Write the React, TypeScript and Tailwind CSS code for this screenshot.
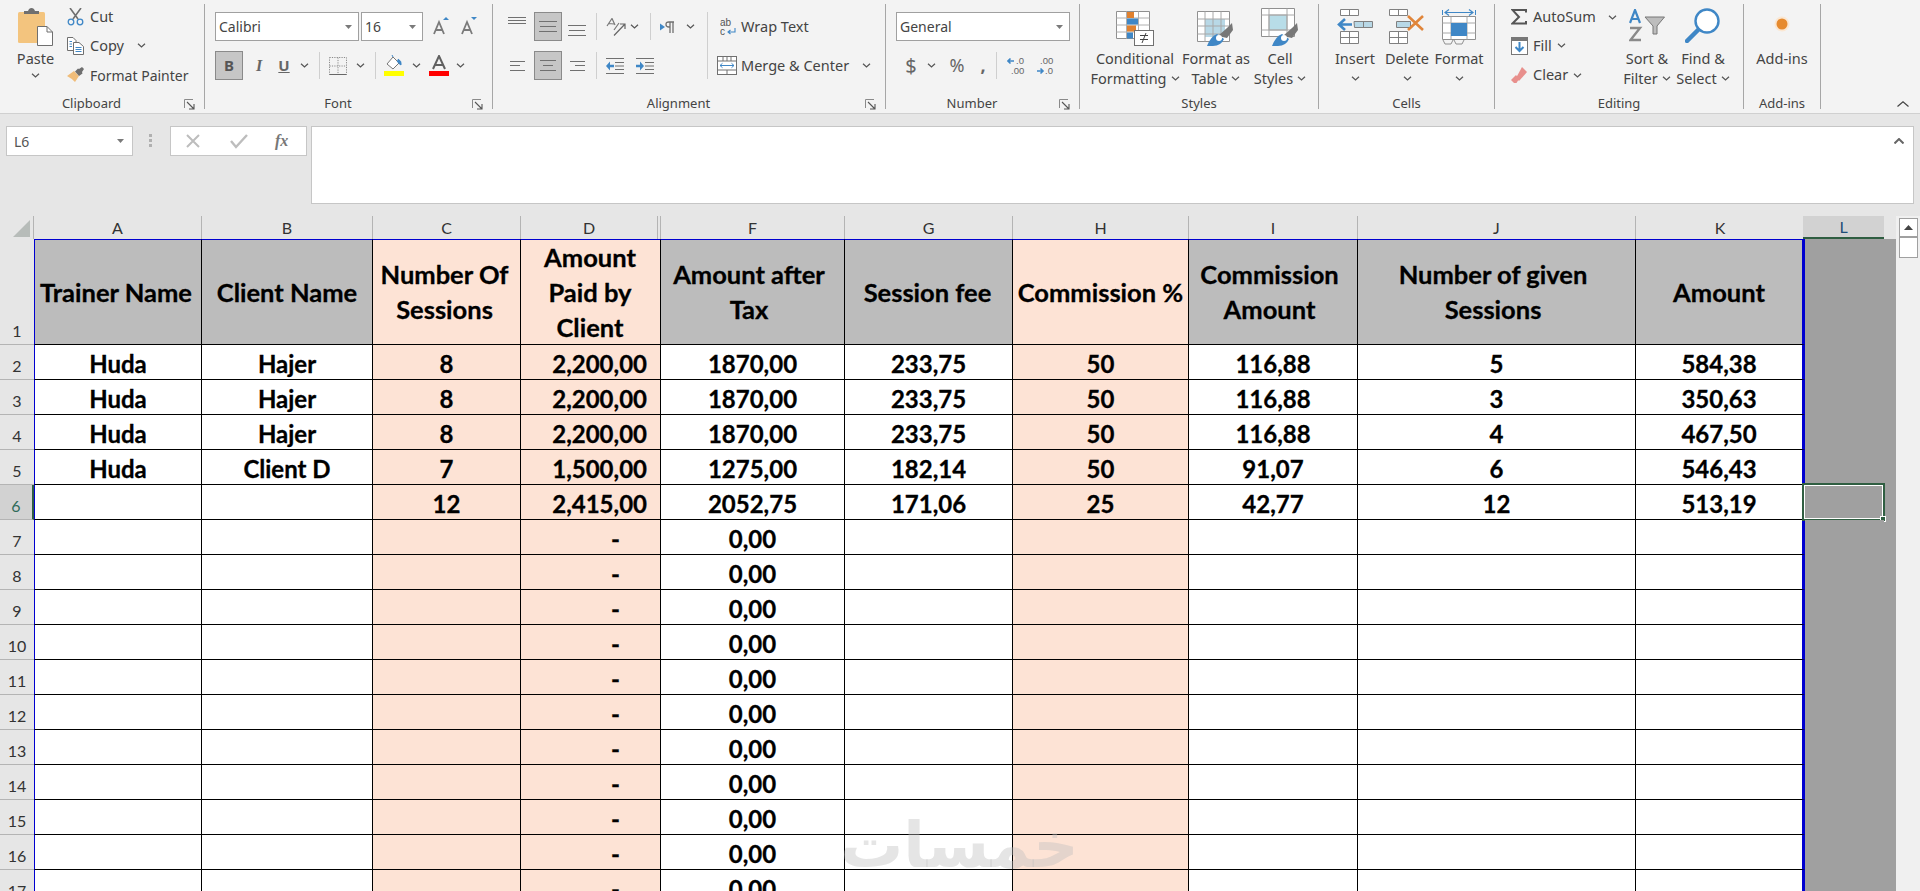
import type { ReactNode } from "react";

const uiFont = "[font-family:'Noto_Sans',sans-serif]";

const Chev = ({ className = "" }: { className?: string }) => (
  <svg width="9" height="5" viewBox="0 0 9 5" className={"shrink-0 " + className}>
    <path d="M1 0.7 L4.5 4 L8 0.7" fill="none" stroke="#555" strokeWidth="1.2" />
  </svg>
);

const DropArrow = () => (
  <svg width="7" height="4" viewBox="0 0 7 4" className="shrink-0">
    <path d="M0 0 H7 L3.5 4 Z" fill="#7a7a7a" />
  </svg>
);

const Launcher = () => (
  <svg width="11" height="11" viewBox="0 0 11 11">
    <path d="M0.5 9 V0.5 H9" fill="none" stroke="#8a8a8a" />
    <path d="M3 3 L9.5 9.5 M5 10 H10 V5" fill="none" stroke="#555" strokeWidth="1.1" />
  </svg>
);

const Sep = ({ className = "" }: { className?: string }) => (
  <div className={"w-px bg-[#cfcfcf] shrink-0 " + className} />
);

const Lines = ({ w = 18, h = 29, ys, xs }: { w?: number; h?: number; ys: number[]; xs: [number, number][] }) => (
  <svg width={w} height={h} viewBox={`0 0 ${w} ${h}`} className="shrink-0">
    {ys.map((y, i) => (
      <line key={y} x1={xs[i][0]} x2={xs[i][1]} y1={y + 0.5} y2={y + 0.5} stroke="#707070" />
    ))}
  </svg>
);

const PasteIcon = () => (
  <svg width="35" height="38" viewBox="0 0 35 38">
    <rect x="0" y="4" width="27" height="31" rx="1.5" fill="#f3c47e" />
    <path d="M6 6 V3 H10 Q11 0 13.5 0 Q16 0 17 3 H21 V6 Z" fill="#6f6f6f" />
    <path d="M19.5 18.5 H29 L34.5 24 V37.5 H19.5 Z" fill="#fff" stroke="#6f6f6f" />
    <path d="M29 18.5 V24 H34.5" fill="none" stroke="#6f6f6f" />
  </svg>
);

const CutIcon = () => (
  <svg width="17" height="18" viewBox="0 0 17 18">
    <path d="M3 0 L11 11 M14 0 L6 11" stroke="#6f6f6f" strokeWidth="1.6" fill="none" />
    <circle cx="4" cy="14" r="2.8" fill="none" stroke="#3f87c6" strokeWidth="1.3" />
    <circle cx="13" cy="14" r="2.8" fill="none" stroke="#3f87c6" strokeWidth="1.3" />
  </svg>
);

const CopyIcon = () => (
  <svg width="17" height="18" viewBox="0 0 17 18">
    <path d="M0.5 0.5 H6 L9 3.5 V13.5 H0.5 Z" fill="#fff" stroke="#6f6f6f" />
    <path d="M6.5 5.5 H12 L16.5 9.5 V17.5 H6.5 Z" fill="#fff" stroke="#6f6f6f" />
    <path d="M2.5 4.5 H5 M2.5 7 H5 M2.5 9.5 H5 M8.5 10.5 H14.5 M8.5 12.5 H14.5 M8.5 14.5 H14.5" stroke="#3f87c6" />
  </svg>
);

const PainterIcon = () => (
  <svg width="18" height="16" viewBox="0 0 18 16">
    <path d="M0 9 L7 4 L12 9 L8 15 Q4 11 0 9 Z" fill="#f0bd7a" />
    <path d="M8 4.5 L11 1.5 L12 2 L15 0 L17 2 L15 5 L15.5 6.5 L12 9 Z" fill="#6f6f6f" />
  </svg>
);

const GrowA = ({ up }: { up: boolean }) => (
  <svg width="16" height="19" viewBox="0 0 16 19">
    <path d="M1 17 L6 5 L11 17 M3 13 H9" fill="none" stroke="#7a7a7a" strokeWidth="1.8" />
    {up ? <path d="M10 3 L13 0 L16 3 Z" fill="#3f87c6" /> : <path d="M10 0 H16 L13 3 Z" fill="#3f87c6" />}
  </svg>
);

const BorderIcon = () => (
  <svg width="18" height="18" viewBox="0 0 18 18">
    <path d="M0.5 0.5 H17.5 V17.5 H0.5 Z M9 0.5 V17.5 M0.5 9 H17.5" fill="none" stroke="#8a8a8a" strokeDasharray="1.2 1.2" />
    <path d="M0.5 17.5 H17.5" stroke="#666" />
  </svg>
);

const FillIcon = () => (
  <svg width="20" height="21" viewBox="0 0 20 21">
    <path d="M3 9 L9 2 L15 8 L9 14 Z" fill="#fff" stroke="#777" />
    <path d="M9 2 L8 0 M14 4 Q18 6 17 10 Q15 9 13 6" fill="#3f87c6" stroke="#3f87c6" />
    <rect y="16" width="20" height="5" fill="#ffff00" />
  </svg>
);

const FontColorIcon = () => (
  <svg width="20" height="21" viewBox="0 0 20 21">
    <path d="M4 14 L10 1 L16 14 M6.5 10 H13.5" fill="none" stroke="#606060" strokeWidth="2" />
    <rect y="16" width="20" height="5" fill="#ff0000" />
  </svg>
);

const OrientIcon = () => (
  <svg width="20" height="18" viewBox="0 0 20 18">
    <path d="M1 8 L6 0.5 L9 7 M2.5 5.5 L8 6 M8 12 L13 5" fill="none" stroke="#777" strokeWidth="1.2" />
    <path d="M8 17.5 L19 6 M14 6 H19 V11" fill="none" stroke="#666" strokeWidth="1.2" />
  </svg>
);

const RtlIcon = () => (
  <svg width="16" height="12" viewBox="0 0 16 12">
    <path d="M0 2.5 L5 6 L0 9.5 Z" fill="#3f87c6" />
    <path d="M14 1 H9 Q6 1 6 3.5 Q6 6 9 6 H10 V12 M10 1 V12 M13 1 V12" fill="none" stroke="#707070" strokeWidth="1.3" />
  </svg>
);

const IndentIcon = ({ flip }: { flip?: boolean }) => (
  <svg width="18" height="16" viewBox="0 0 18 16">
    <path d="M0 0.5 H18 M9 4.5 H18 M9 8 H18 M9 11.5 H18 M0 15.5 H18" stroke="#707070" />
    {flip ? (
      <path d="M0 6.8 H4 V3.5 L8 8 L4 12.5 V9.2 H0 Z" fill="#3f87c6" />
    ) : (
      <path d="M8 6.8 H4 V3.5 L0 8 L4 12.5 V9.2 H8 Z" fill="#3f87c6" />
    )}
  </svg>
);

const WrapIcon = () => (
  <svg width="16" height="18" viewBox="0 0 16 18">
    <text x="0" y="8" fontSize="10" fill="#555" className="[font-family:'Liberation_Sans',sans-serif]">ab</text>
    <text x="0" y="17" fontSize="10" fill="#555" className="[font-family:'Liberation_Sans',sans-serif]">c</text>
    <path d="M15 10 V14 H8 M10.5 12 L8 14 L10.5 16" fill="none" stroke="#3f87c6" strokeWidth="1.1" />
  </svg>
);

const MergeIcon = () => (
  <svg width="20" height="19" viewBox="0 0 20 19">
    <rect x="0.5" y="0.5" width="19" height="18" fill="#fff" stroke="#707070" />
    <path d="M0.5 5 H19.5 M0.5 14 H19.5 M10 0.5 V5 M6 5 V0.5 M14 0.5 V5 M10 14 V18.5" stroke="#707070" />
    <path d="M3 9.5 H17 M5.5 7.3 L3 9.5 L5.5 11.7 M14.5 7.3 L17 9.5 L14.5 11.7" fill="none" stroke="#3f87c6" />
  </svg>
);

const DecIcon = ({ more }: { more?: boolean }) => (
  <svg width="18" height="20" viewBox="0 0 18 20">
    {more ? (
      <>
        <path d="M7 5 H1 M3.5 2.5 L1 5 L3.5 7.5" fill="none" stroke="#3f87c6" strokeWidth="1.6" />
        <text x="9" y="8" fontSize="9.5" fill="#666" className="[font-family:'Liberation_Sans',sans-serif]">.0</text>
        <text x="4" y="18" fontSize="9.5" fill="#666" className="[font-family:'Liberation_Sans',sans-serif]">.00</text>
      </>
    ) : (
      <>
        <text x="4" y="8" fontSize="9.5" fill="#666" className="[font-family:'Liberation_Sans',sans-serif]">.00</text>
        <path d="M1 15 H7 M4.5 12.5 L7 15 L4.5 17.5" fill="none" stroke="#3f87c6" strokeWidth="1.6" />
        <text x="9" y="18" fontSize="9.5" fill="#666" className="[font-family:'Liberation_Sans',sans-serif]">.0</text>
      </>
    )}
  </svg>
);

const CondIcon = () => (
  <svg width="38" height="35" viewBox="0 0 38 35">
    <path d="M0.5 0.5 H33.5 V27.5 H0.5 Z" fill="#fff" stroke="#909090" />
    <path d="M10.5 0.5 V27.5 M22.5 0.5 V27.5 M0.5 7 H33.5 M0.5 14 H33.5 M0.5 21 H33.5" stroke="#b0b0b0" />
    <rect x="11" y="1" width="7" height="6" fill="#e0812f" />
    <rect x="11" y="7.5" width="11" height="6" fill="#3f87c6" />
    <rect x="11" y="14.5" width="9" height="6" fill="#e0812f" />
    <rect x="11" y="21.5" width="6" height="6" fill="#3f87c6" />
    <rect x="18.5" y="19.5" width="19" height="15" fill="#fff" stroke="#707070" />
    <path d="M24 24.5 H32 M24 28.5 H32 M30 22 L26 32" stroke="#444" fill="none" />
  </svg>
);

const BrushPart = ({ x = 22, y = 15 }: { x?: number; y?: number }) => (
  <g transform={`translate(${x} ${y})`}>
    <path d="M0 13 L9 5 L14 0 L15 7 L9 15 Z" fill="#777" />
    <path d="M-11 23 Q-7 13 -1 11 L6 16 Q3 23 -5 23 Z" fill="#3f87c6" />
    <circle cx="1" cy="15" r="3" fill="#fff" />
  </g>
);

const TableIcon = () => (
  <svg width="38" height="35" viewBox="0 0 38 35">
    <path d="M0.5 0.5 H32.5 V30.5 H0.5 Z" fill="#fff" stroke="#909090" />
    <rect x="8" y="8" width="20" height="18" fill="#b8d8e6" />
    <path d="M8 0.5 V30.5 M16 0.5 V30.5 M24 0.5 V30.5 M0.5 8 H32.5 M0.5 15 H32.5 M0.5 23 H32.5" stroke="#a8a8a8" />
    <BrushPart x={21} y={12} />
  </svg>
);

const StylesIcon = () => (
  <svg width="39" height="38" viewBox="0 0 39 38">
    <path d="M0.5 0.5 H33.5 V28.5 H0.5 Z" fill="#fff" stroke="#909090" />
    <rect x="8" y="7" width="18" height="15" fill="#b8dde8" stroke="#a8a8a8" />
    <path d="M8 0.5 V28.5 M26 0.5 V28.5 M0.5 7 H33.5 M0.5 22 H33.5" stroke="#a8a8a8" />
    <BrushPart x={22} y={15} />
  </svg>
);

const Grid2 = ({ x, y }: { x: number; y: number }) => (
  <g transform={`translate(${x} ${y})`}>
    <path d="M0.5 0.5 H18.5 V6.5 H0.5 Z M9.5 0.5 V6.5" fill="#fff" stroke="#808080" />
  </g>
);

const InsertIcon = () => (
  <svg width="36" height="35" viewBox="0 0 36 35">
    <Grid2 x={3} y={0} />
    <path d="M17 12.5 H35.5 V18.5 H17.5 Z M26.5 12.5 V18.5" fill="#b8d8e6" stroke="#808080" />
    <path d="M15 15.5 H2 M8 10 L2 15.5 L8 21" fill="none" stroke="#3f87c6" strokeWidth="2.6" />
    <path d="M3.5 22.5 H21.5 V34.5 H3.5 Z M12.5 22.5 V34.5 M3.5 28.5 H21.5" fill="#fff" stroke="#808080" />
  </svg>
);

const DeleteIcon = () => (
  <svg width="36" height="35" viewBox="0 0 36 35">
    <Grid2 x={0} y={0} />
    <path d="M7.5 12.5 H21.5 V18.5 H7.5 Z" fill="#b8d8e6" stroke="#808080" />
    <path d="M19 7 L34 21 M34 7 L19 21" stroke="#e0853a" strokeWidth="2.6" />
    <path d="M0.5 22.5 H18.5 V34.5 H0.5 Z M9.5 22.5 V34.5 M0.5 28.5 H18.5" fill="#fff" stroke="#808080" />
  </svg>
);

const FormatIcon = () => (
  <svg width="34" height="37" viewBox="0 0 34 37">
    <path d="M0.5 2 V7 M33.5 2 V7" stroke="#3f87c6" />
    <path d="M3 4.5 H31 M7 1.5 L3 4.5 L7 7.5 M27 1.5 L31 4.5 L27 7.5" fill="none" stroke="#3f87c6" strokeWidth="1.2" />
    <path d="M0.5 8.5 H33.5 V31.5 H0.5 Z" fill="#fff" stroke="#909090" />
    <path d="M9 8.5 V31.5 M25 8.5 V31.5 M0.5 15 H33.5 M0.5 25 H33.5" stroke="#a8a8a8" />
    <rect x="9" y="15" width="16" height="13" fill="#3f87c6" />
    <path d="M1 32 L3 36 H9 L11 32 M12 32 L14 36 H20 L22 32" fill="none" stroke="#909090" />
  </svg>
);

const SigmaIcon = () => (
  <svg width="16" height="16" viewBox="0 0 16 16">
    <path d="M15 3.5 V1 H1.5 L8 8 L1.5 14.5 H15 V12" fill="none" stroke="#555" strokeWidth="2" />
  </svg>
);

const FillDownIcon = () => (
  <svg width="17" height="18" viewBox="0 0 17 18">
    <rect x="0.5" y="0.5" width="16" height="17" fill="#fff" stroke="#777" />
    <rect x="1" y="1" width="15" height="3" fill="#777" />
    <path d="M8.5 5 V14 M4.5 10 L8.5 14 L12.5 10" fill="none" stroke="#3f87c6" strokeWidth="2" />
  </svg>
);

const EraserIcon = () => (
  <svg width="16" height="16" viewBox="0 0 16 16">
    <path d="M11 0 L16 5 L8 14 L5 11 Z" fill="#e88f8c" />
    <path d="M5 8 L8 12 L5.5 16 H3 L0 13 Z" fill="#e88f8c" />
  </svg>
);

const SortIcon = () => (
  <svg width="36" height="33" viewBox="0 0 36 33">
    <path d="M1 14 L6 1 L11 14 M3 10 H9" fill="none" stroke="#3f87c6" strokeWidth="2.2" />
    <path d="M1 19 H11 L1.5 31 H12" fill="none" stroke="#8a8a8a" strokeWidth="2.4" />
    <path d="M16 8 H35.5 L28 17 V25 L24 25 V17 Z" fill="#bdbdbd" stroke="#777" />
  </svg>
);

const FindIcon = () => (
  <svg width="36" height="35" viewBox="0 0 36 35">
    <circle cx="22" cy="13" r="11.5" fill="#fff" stroke="#3f87c6" strokeWidth="2.4" />
    <path d="M13 22 L2 33" stroke="#3f87c6" strokeWidth="4.5" strokeLinecap="round" />
  </svg>
);

const AddinIcon = () => (
  <svg width="16" height="16" viewBox="0 0 16 16">
    <circle cx="8" cy="8" r="7.5" fill="#fbe7d2" />
    <circle cx="8" cy="8" r="5.5" fill="#e68a2e" />
  </svg>
);

const Group = ({ w, label, launcher, children }: { w: string; label: string; launcher?: boolean; children: ReactNode }) => (
  <div className={"flex flex-col shrink-0 " + w}>
    <div className="h-[92px]">{children}</div>
    <div className="flex h-[21px] items-center pt-[3px]">
      <div className="flex-1 text-center text-[13px] text-[#444]">{label}</div>
      {launcher && (
        <div className="flex w-[21px] items-center justify-start pt-[1px] pl-[1px]">
          <Launcher />
        </div>
      )}
    </div>
  </div>
);

const Divider = () => <div className="my-[4px] w-px shrink-0 bg-[#a6a6a6]" />;

const BigBtn = ({ w, icon, line1, line2, iconPad = "pb-[2px]" }: { w: string; icon: ReactNode; line1: string; line2?: string; iconPad?: string }) => (
  <div className={"flex flex-col items-center shrink-0 " + w}>
    <div className={"flex h-[48px] items-end justify-center " + iconPad}>{icon}</div>
    <div className="h-[20px] whitespace-nowrap text-[14.5px] leading-[20px] text-[#444]">{line1}</div>
    {line2 ? (
      <div className="flex h-[20px] items-center gap-[4px] whitespace-nowrap text-[14.5px] leading-[20px] text-[#444]">
        {line2}
        <Chev />
      </div>
    ) : (
      <div className="flex h-[20px] items-center">
        <Chev />
      </div>
    )}
  </div>
);

const Combo = ({ w, h, text }: { w: string; h: string; text: string }) => (
  <div className={"flex items-center justify-between border border-[#a0a0a0] bg-white pr-[6px] pl-[3px] text-[14px] text-[#444] " + w + " " + h}>
    <span>{text}</span>
    <DropArrow />
  </div>
);

const Ribbon = () => (
  <div className="flex h-[114px] border-b border-[#d0d0d0] bg-[#f3f3f3]">
    <Group w="w-[204px]" label="Clipboard" launcher>
      <div className="flex">
        <div className="flex w-[67px] flex-col items-center pt-[8px] pl-[4px]">
          <PasteIcon />
          <div className="mt-[2px] h-[20px] text-[14.5px] leading-[20px] text-[#444]">Paste</div>
          <Chev className="mt-[5px]" />
        </div>
        <div className="flex flex-col pt-[3px] text-[14.5px] text-[#444]">
          <div className="flex h-[28px] items-center gap-[6px]"><CutIcon />Cut</div>
          <div className="flex h-[29px] items-center gap-[6px]"><CopyIcon />Copy<Chev className="ml-[7px]" /></div>
          <div className="flex h-[30px] items-center gap-[5px] text-[14px]"><PainterIcon />Format Painter</div>
        </div>
      </div>
    </Group>
    <Divider />
    <Group w="w-[287px]" label="Font" launcher>
      <div className="flex flex-col pt-[12px] pl-[10px]">
        <div className="flex h-[29px] items-center">
          <Combo w="w-[144px]" h="h-[29px]" text="Calibri" />
          <Combo w="w-[62px] ml-[2px]" h="h-[29px]" text="16" />
          <div className="ml-[10px]"><GrowA up /></div>
          <div className="ml-[12px]"><GrowA up={false} /></div>
        </div>
        <div className="mt-[10px] flex h-[29px] items-center">
          <div className="flex h-[29px] w-[28px] items-center justify-center border border-[#8a8a8a] bg-[#c6c6c6] text-[15px] font-bold text-[#555]">B</div>
          <div className="ml-[11px] w-[10px] text-center text-[16px] font-bold italic text-[#666] [font-family:'Liberation_Serif',serif]">I</div>
          <div className="ml-[14px] w-[12px] text-center text-[15px] font-bold text-[#666] underline">U</div>
          <Chev className="ml-[10px]" />
          <Sep className="ml-[10px] h-[27px]" />
          <div className="ml-[9px]"><BorderIcon /></div>
          <Chev className="ml-[9px]" />
          <Sep className="ml-[10px] h-[27px]" />
          <div className="ml-[8px]"><FillIcon /></div>
          <Chev className="ml-[8px]" />
          <div className="ml-[8px]"><FontColorIcon /></div>
          <Chev className="ml-[7px]" />
        </div>
      </div>
    </Group>
    <Divider />
    <Group w="w-[392px]" label="Alignment" launcher>
      <div className="flex pt-[12px]">
        <div className="flex w-[214px] flex-col pl-[15px]">
          <div className="flex h-[29px] items-center">
            <Lines ys={[5, 8, 11]} xs={[[0, 18], [0, 18], [0, 18]]} />
            <div className="ml-[8px] flex h-[29px] w-[28px] items-center justify-center border border-[#8a8a8a] bg-[#c6c6c6]">
              <Lines w={18} h={11} ys={[0, 5, 10]} xs={[[0, 18], [1, 17], [0, 18]]} />
            </div>
            <div className="ml-[6px]"><Lines ys={[13, 18, 23]} xs={[[0, 18], [1, 17], [0, 18]]} /></div>
            <Sep className="ml-[10px] h-[27px]" />
            <div className="ml-[9px]"><OrientIcon /></div>
            <Chev className="ml-[4px]" />
            <Sep className="ml-[11px] h-[27px]" />
            <div className="ml-[9px]"><RtlIcon /></div>
            <Chev className="ml-[10px]" />
          </div>
          <div className="mt-[10px] flex h-[29px] items-center">
            <div className="ml-[2px]"><Lines w={16} ys={[10, 14, 19]} xs={[[0, 15], [0, 10], [0, 15]]} /></div>
            <div className="ml-[8px] flex h-[29px] w-[28px] items-center justify-center border border-[#8a8a8a] bg-[#c6c6c6]">
              <Lines w={18} h={11} ys={[0, 5, 10]} xs={[[1, 17], [4, 14], [1, 17]]} />
            </div>
            <div className="ml-[8px]"><Lines w={16} ys={[10, 14, 19]} xs={[[0, 15], [5, 15], [0, 15]]} /></div>
            <Sep className="ml-[10px] h-[27px]" />
            <div className="ml-[9px]"><IndentIcon /></div>
            <div className="ml-[12px]"><IndentIcon flip /></div>
          </div>
        </div>
        <Sep className="h-[67px]" />
        <div className="flex flex-col text-[14.5px] text-[#444]">
          <div className="flex h-[29px] items-center pl-[12px]"><WrapIcon /><span className="ml-[5px]">Wrap Text</span></div>
          <div className="mt-[10px] flex h-[29px] items-center pl-[9px]"><MergeIcon /><span className="ml-[4px]">Merge &amp; Center</span><Chev className="ml-[13px]" /></div>
        </div>
      </div>
    </Group>
    <Divider />
    <Group w="w-[193px]" label="Number" launcher>
      <div className="flex flex-col pt-[12px] pl-[10px]">
        <Combo w="w-[174px]" h="h-[29px]" text="General" />
        <div className="mt-[10px] flex h-[29px] items-center text-[#666]">
          <span className="ml-[9px] w-[12px] text-center text-[20px]">$</span>
          <Chev className="ml-[10px]" />
          <span className="ml-[11px] w-[20px] text-center text-[18px]">%</span>
          <span className="ml-[11px] w-[10px] text-center text-[18px] font-bold">,</span>
          <Sep className="ml-[8px] h-[27px]" />
          <div className="ml-[10px]"><DecIcon more /></div>
          <div className="ml-[11px]"><DecIcon /></div>
        </div>
      </div>
    </Group>
    <Divider />
    <Group w="w-[238px]" label="Styles">
      <div className="flex pl-[14px]">
        <BigBtn w="w-[82px]" icon={<CondIcon />} line1="Conditional" line2="Formatting" />
        <BigBtn w="w-[80px]" icon={<TableIcon />} line1="Format as" line2="Table" />
        <BigBtn w="w-[48px]" icon={<StylesIcon />} line1="Cell" line2="Styles" />
      </div>
    </Group>
    <Divider />
    <Group w="w-[175px]" label="Cells">
      <div className="flex pl-[10px]">
        <BigBtn w="w-[52px]" icon={<InsertIcon />} line1="Insert" iconPad="pb-[4px]" />
        <BigBtn w="w-[52px]" icon={<DeleteIcon />} line1="Delete" iconPad="pb-[4px]" />
        <BigBtn w="w-[52px]" icon={<FormatIcon />} line1="Format" iconPad="pb-[3px]" />
      </div>
    </Group>
    <Divider />
    <Group w="w-[248px]" label="Editing">
      <div className="flex pl-[16px]">
        <div className="flex w-[110px] flex-col pt-[3px] text-[14.5px] text-[#444]">
          <div className="flex h-[28px] items-center"><SigmaIcon /><span className="ml-[6px]">AutoSum</span><Chev className="ml-[12px]" /></div>
          <div className="flex h-[29px] items-center"><FillDownIcon /><span className="ml-[5px]">Fill</span><Chev className="ml-[5px]" /></div>
          <div className="flex h-[30px] items-center"><EraserIcon /><span className="ml-[6px]">Clear</span><Chev className="ml-[5px]" /></div>
        </div>
        <BigBtn w="w-[52px]" icon={<SortIcon />} line1="Sort &amp;" line2="Filter" iconPad="pb-[6px]" />
        <BigBtn w="w-[60px]" icon={<FindIcon />} line1="Find &amp;" line2="Select" iconPad="pb-[5px]" />
      </div>
    </Group>
    <Divider />
    <Group w="w-[76px]" label="Add-ins">
      <div className="flex flex-col items-center">
        <div className="flex h-[48px] items-center justify-center"><AddinIcon /></div>
        <div className="h-[20px] text-[14.5px] leading-[20px] text-[#444]">Add-ins</div>
      </div>
    </Group>
    <Divider />
    <div className="flex flex-1 items-end justify-end pr-[11px] pb-[6px]">
      <svg width="12" height="6" viewBox="0 0 12 6">
        <path d="M0.5 5.5 L6 0.8 L11.5 5.5" fill="none" stroke="#444" strokeWidth="1.2" />
      </svg>
    </div>
  </div>
);

const FormulaBar = () => (
  <div className="flex h-[102px] items-start bg-[#e6e6e6] pt-[12px] pl-[6px]">
    <div className="flex h-[30px] w-[127px] items-center justify-between border border-[#c6c6c6] bg-white pr-[8px] pl-[7px] text-[14px] text-[#555]">
      L6
      <DropArrow />
    </div>
    <div className="ml-[16px] mt-[8px] flex flex-col gap-[2px]">
      <div className="h-[3px] w-[3px] bg-[#b0b0b0]" />
      <div className="h-[3px] w-[3px] bg-[#b0b0b0]" />
      <div className="h-[3px] w-[3px] bg-[#b0b0b0]" />
    </div>
    <div className="ml-[18px] flex h-[30px] w-[137px] items-center border border-[#c6c6c6] bg-white">
      <svg width="16" height="16" viewBox="0 0 16 16" className="ml-[14px]">
        <path d="M2 2 L14 14 M14 2 L2 14" stroke="#bdbdbd" strokeWidth="2" />
      </svg>
      <svg width="18" height="16" viewBox="0 0 18 16" className="ml-[29px]">
        <path d="M1 8 L6 14 L17 2" fill="none" stroke="#bdbdbd" strokeWidth="2.4" />
      </svg>
      <span className="ml-[27px] text-[16px] font-bold italic text-[#777] [font-family:'Liberation_Serif',serif]">fx</span>
    </div>
    <div className="mr-[6px] ml-[4px] flex h-[78px] flex-1 justify-end border border-[#c6c6c6] bg-white pt-[11px] pr-[9px]">
      <svg width="10" height="6" viewBox="0 0 10 6">
        <path d="M0.5 5.5 L5 1 L9.5 5.5" fill="none" stroke="#666" strokeWidth="2" />
      </svg>
    </div>
  </div>
);

const colNames = ["A", "B", "C", "D", "F", "G", "H", "I", "J", "K"];
const gray = "bg-[#bcbcbc]";
const peach = "bg-[#fde3d5]";
const headerBg = [gray, gray, peach, peach, gray, gray, peach, gray, gray, gray];
const bodyBg = ["bg-white", "bg-white", peach, peach, "bg-white", "bg-white", peach, "bg-white", "bg-white", "bg-white"];
const headerPad = ["pr-[5px]", "pr-[1px]", "pr-[5px]", "pr-[2px]", "pr-[8px]", "pr-[3px]", "pr-[1px]", "pr-[8px]", "pr-[8px]", "pr-[1px]"];
const headers = [
  "Trainer Name",
  "Client Name",
  "Number Of Sessions",
  "Amount Paid by Client",
  "Amount after Tax",
  "Session fee",
  "Commission %",
  "Commission Amount",
  "Number of given Sessions",
  "Amount",
];

const filled = [
  ["Huda", "Hajer", "8", "2,200,00", "1870,00", "233,75", "50", "116,88", "5", "584,38"],
  ["Huda", "Hajer", "8", "2,200,00", "1870,00", "233,75", "50", "116,88", "3", "350,63"],
  ["Huda", "Hajer", "8", "2,200,00", "1870,00", "233,75", "50", "116,88", "4", "467,50"],
  ["Huda", "Client D", "7", "1,500,00", "1275,00", "182,14", "50", "91,07", "6", "546,43"],
  ["", "", "12", "2,415,00", "2052,75", "171,06", "25", "42,77", "12", "513,19"],
];
const blank = ["", "", "", "-", "0,00", "", "", "", "", ""];
const rows = [...filled, ...Array.from({ length: 11 }, () => blank)];

const cellEdge = (c: number) =>
  c === 9 ? "border-r-[3px] border-r-[#0000d0]" : c === 0 ? "border-l border-l-[#0000d0] border-r border-r-black" : "border-r border-r-black";

const boldText = "[font-family:Lato,sans-serif] font-bold text-black [-webkit-text-stroke:0.3px_black]";

const Sheet = () => (
  <div className="flex min-h-0 flex-1 bg-[#e6e6e6]">
    <div className="relative grid flex-1 auto-rows-max grid-cols-[34px_168px_171px_148px_140px_184px_168px_176px_169px_278px_169px_79px_12px] content-start overflow-hidden">
      {/* column headers */}
      <div className="relative h-[23px] border-r border-r-[#b4b4b4]">
        <svg width="17" height="17" viewBox="0 0 17 17" className="absolute top-[4px] left-[13px]">
          <path d="M17 0 V17 H0 Z" fill="#b7bcb9" />
        </svg>
      </div>
      {colNames.map((n) => (
        <div
          key={n}
          className={"flex h-[23px] items-center justify-center border-r border-r-[#b4b4b4] text-[16px] text-[#333] [font-family:Lato,sans-serif] " + (n === "D" ? "border-double border-r-[4px]" : "")}
        >
          {n}
        </div>
      ))}
      <div className="-ml-[2px] flex h-[23px] items-center justify-center border-b-2 border-b-[#2f5e41] bg-[#d2d2d2] text-[16px] text-[#1f4e79] [font-family:Lato,sans-serif]">L</div>
      <div className="h-[23px]" />

      {/* row 1 */}
      <div className="flex h-[106px] items-end justify-center border-b border-b-[#b4b4b4] pb-[1px] text-[16px] text-[#333] [font-family:Lato,sans-serif]">1</div>
      {headers.map((h, c) => (
        <div
          key={h}
          className={`flex h-[106px] items-center justify-center border-t border-t-[#0000d0] border-b border-b-black pl-[1px] text-center text-[25.5px] leading-[35px] ${headerPad[c]} ${headerBg[c]} ${cellEdge(c)} ${boldText}`}
        >
          {h}
        </div>
      ))}
      <div className="h-[106px] bg-[#a0a0a0]" />
      <div className="h-[106px] bg-[#a0a0a0]" />

      {/* body */}
      {rows.map((row, r) => (
        <Row key={r} num={r + 2} cells={row} />
      ))}

      {/* watermark */}
      <div className="pointer-events-none absolute top-[590px] left-[840px] text-[63px] leading-[80px] font-bold text-[#bdbdbd]/40 [font-family:'DejaVu_Sans',sans-serif]">
        خمسات
      </div>
    </div>
    <div className="flex w-[24px] shrink-0 flex-col items-center bg-[#f0f0f0] pt-[2px]">
      <div className="flex h-[19px] w-[19px] items-center justify-center border border-[#a0a0a0] bg-white">
        <svg width="9" height="5" viewBox="0 0 9 5"><path d="M0 5 L4.5 0 L9 5 Z" fill="#444" /></svg>
      </div>
      <div className="h-[21px] w-[19px] border border-[#a0a0a0] bg-white" />
    </div>
  </div>
);

const Row = ({ num, cells }: { num: number; cells: string[] }) => {
  const active = num === 6;
  return (
    <>
      <div
        className={
          "flex h-[35px] items-end justify-center border-b border-b-[#b4b4b4] pb-[1px] text-[16px] [font-family:Lato,sans-serif] " +
          (active ? "border-r-2 border-r-[#2f5e41] bg-[#d2d2d2] text-[#2f6b5a]" : "text-[#333]")
        }
      >
        {num}
      </div>
      {cells.map((t, c) => (
        <div
          key={c}
          className={`flex h-[35px] items-start border-b border-b-black pt-[1px] text-[24px] leading-[35px] ${t === "-" ? "justify-end pr-[40px]" : c === 3 ? "justify-end pr-[13px]" : "justify-center"} ${bodyBg[c]} ${cellEdge(c)} ${boldText}`}
        >
          {t}
        </div>
      ))}
      <div className="relative h-[35px] bg-[#a0a0a0]">
        {active && (
          <div className="absolute -top-[2px] -right-px -bottom-px -left-[3px] border-2 border-[#2f5e41]">
            <div className="h-full w-full border border-white" />
            <div className="absolute -right-[3px] -bottom-[3px] h-[6px] w-[6px] border border-white bg-[#2f5e41]" />
          </div>
        )}
      </div>
      <div className="h-[35px] bg-[#a0a0a0]" />
    </>
  );
};

export default function App() {
  return (
    <div className={"flex h-[891px] w-[1920px] flex-col overflow-hidden " + uiFont}>
      <Ribbon />
      <FormulaBar />
      <Sheet />
    </div>
  );
}
